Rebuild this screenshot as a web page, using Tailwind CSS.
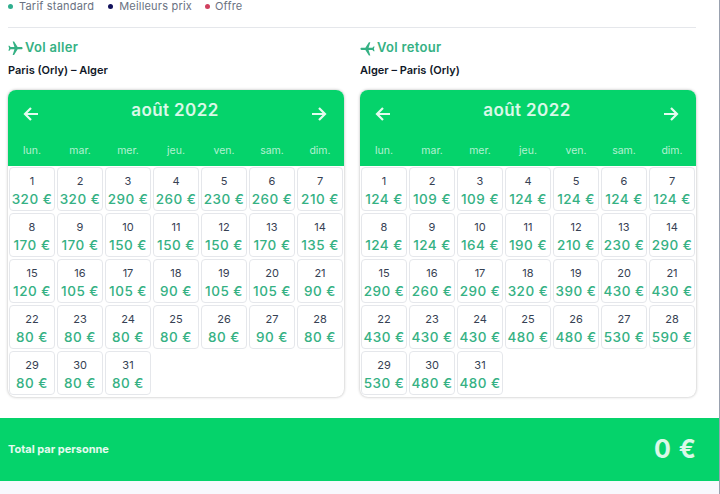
<!DOCTYPE html>
<html lang="fr">
<head>
  <meta charset="UTF-8" />
  <title>Calendrier des vols</title>
  <script src="https://cdn.jsdelivr.net/npm/@tailwindcss/browser@4"></script>
</head>
<body class="bg-white overflow-hidden font-['Inter',sans-serif]">
  <div class="w-[720px] h-[494px] overflow-hidden flex flex-col border-r border-gray-400">
    <!-- legende -->
    <div class="h-[13px] pl-[8px] flex items-center text-[11px] leading-none text-gray-500 tracking-[0.2px]">
      <span class="w-[5px] h-[5px] rounded-full bg-[#2fae8e] mr-[6px]"></span><span class="mr-[14px]">Tarif standard</span>
      <span class="w-[5px] h-[5px] rounded-full bg-[#12125c] mr-[6px]"></span><span class="mr-[13px]">Meilleurs prix</span>
      <span class="w-[5px] h-[5px] rounded-full bg-[#d0405f] mr-[5px]"></span><span>Offre</span>
    </div>
    <div class="mt-[14px] ml-[8px] w-[688px] h-px bg-gray-200"></div>

    <div class="pl-[8px] pt-[12px] flex gap-[16px] h-[390px]">
      <section class="w-[336px]">
        <h2 class="h-[16px] flex items-center gap-[1px] text-[13px] font-semibold text-[#35b184] tracking-[0.3px]">
          <svg class="-ml-[1px] w-[17px] h-[17px] fill-[#35b184]" viewBox="0 0 24 24"><path transform="rotate(90 12 12)" d="M21 16v-2l-8-5V3.5c0-.83-.67-1.5-1.5-1.5S10 2.67 10 3.5V9l-8 5v2l8-2.5V19l-2 1.5V22l3.5-1 3.5 1v-1.5L13 19v-5.5l8 2.5z"/></svg>
          Vol aller
        </h2>
        <p class="mt-[7px] h-[14px] text-[11px] leading-[14px] font-semibold text-gray-900">Paris (Orly) – Alger</p>
        <div id="cal1" class="mt-[13px] w-[336px] h-[307px] rounded-[8px] shadow-[0_0_3px_rgba(0,0,0,0.3)] overflow-hidden"></div>
      </section>
      <section class="w-[336px]">
        <h2 class="h-[16px] flex items-center gap-[1px] text-[13px] font-semibold text-[#35b184] tracking-[0.3px]">
          <svg class="-ml-[1px] w-[17px] h-[17px] fill-[#35b184]" viewBox="0 0 24 24"><path transform="rotate(-90 12 12)" d="M21 16v-2l-8-5V3.5c0-.83-.67-1.5-1.5-1.5S10 2.67 10 3.5V9l-8 5v2l8-2.5V19l-2 1.5V22l3.5-1 3.5 1v-1.5L13 19v-5.5l8 2.5z"/></svg>
          Vol retour
        </h2>
        <p class="mt-[7px] h-[14px] text-[11px] leading-[14px] font-semibold text-gray-900">Alger – Paris (Orly)</p>
        <div id="cal2" class="mt-[13px] w-[336px] h-[307px] rounded-[8px] shadow-[0_0_3px_rgba(0,0,0,0.3)] overflow-hidden"></div>
      </section>
    </div>

    <div class="h-[63px] bg-[#05d36b] flex items-center justify-between pl-[8px] pr-[22px]">
      <span class="text-[11px] font-bold text-white/90">Total par personne</span>
      <span class="text-[25px] font-bold text-white/85 tracking-[1px]">0 €</span>
    </div>
    <div class="flex-1 bg-[#f8f8fd]"></div>
  </div>

  <script>
    const days = ['lun.', 'mar.', 'mer.', 'jeu.', 'ven.', 'sam.', 'dim.'];
    const aller = [320,320,290,260,230,260,210,170,170,150,150,150,170,135,120,105,105,90,105,105,90,80,80,80,80,80,90,80,80,80,80];
    const retour = [124,109,109,124,124,124,124,124,124,164,190,210,230,290,290,260,290,320,390,430,430,430,430,430,480,480,530,590,530,480,480];

    function render(id, prices) {
      const head = `
        <div class="h-[76px] bg-[#05d36b] text-white">
          <div class="h-[43px] pt-[3px] pl-[14px] pr-[16px] flex items-center justify-between">
            <svg class="w-[18px] h-[18px] mt-[2px]" viewBox="0 0 18 18" fill="none" stroke="#e4fbef" stroke-width="2.2"><path d="M16 9H3M9 3 3 9l6 6"/></svg>
            <span class="-mt-[4px] text-[17px] font-semibold text-white/85 tracking-[0.4px]">août 2022</span>
            <svg class="w-[18px] h-[18px] mt-[2px]" viewBox="0 0 18 18" fill="none" stroke="#e4fbef" stroke-width="2.2"><path d="M2 9h13M9 3l6 6-6 6"/></svg>
          </div>
          <div class="grid grid-cols-[repeat(7,48px)] h-[33px] pt-[2px] items-center text-center text-[10.5px] text-white/70">
            ${days.map(d => `<span>${d}</span>`).join('')}
          </div>
        </div>`;
      const cells = prices.map((p, i) => `
        <div class="w-[46px] h-[44px] rounded-[4px] border border-gray-200 flex flex-col items-center pt-[6px]">
          <span class="text-[11px] leading-[14px] text-gray-700">${i + 1}</span>
          <span class="mt-[3px] text-[13.5px] leading-[16px] font-medium text-[#35b184] tracking-[0.5px] whitespace-nowrap">${p} €</span>
        </div>`).join('');
      document.getElementById(id).innerHTML = head +
        `<div class="grid grid-cols-[repeat(7,46px)] gap-x-[2px] gap-y-[2px] pl-[1px] pt-[1px]">${cells}</div>`;
    }
    render('cal1', aller);
    render('cal2', retour);
  </script>
</body>
</html>
